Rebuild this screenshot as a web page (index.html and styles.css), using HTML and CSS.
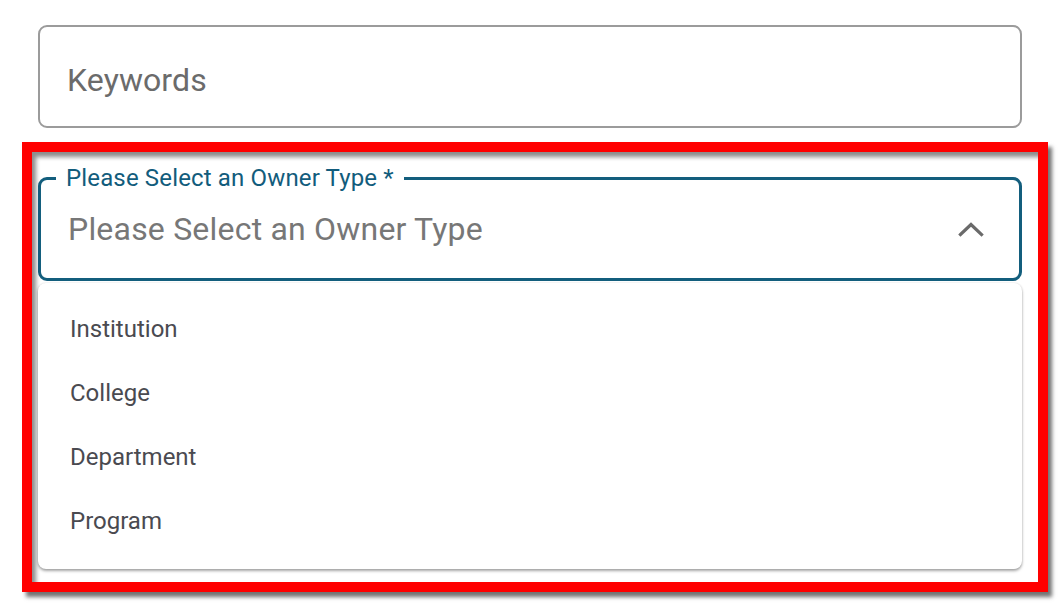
FILE: index.html
```html
<!DOCTYPE html>
<html lang="en">
<head>
<meta charset="utf-8">
<title>Owner Type</title>
<link rel="stylesheet" href="styles.css">
</head>
<body>
<div class="page">
  <div class="input-box">
    <span class="input-placeholder">Keywords</span>
  </div>
  <div class="highlight">
    <fieldset class="select-field">
      <legend class="select-label">Please Select an Owner Type *</legend>
      <div class="select-row">
        <span class="select-placeholder">Please Select an Owner Type</span>
        <svg class="chevron" width="26" height="16" viewBox="0 0 26 16" aria-hidden="true">
          <path d="M2.5 13.5 L13 3.5 L23.5 13.5" fill="none" stroke="#6a6a6a" stroke-width="3.2" stroke-linecap="square"/>
        </svg>
      </div>
    </fieldset>
    <ul class="menu">
      <li class="menu-item">Institution</li>
      <li class="menu-item">College</li>
      <li class="menu-item">Department</li>
      <li class="menu-item">Program</li>
    </ul>
  </div>
</div>
</body>
</html>
```

FILE: styles.css
```css
html, body {
  margin: 0;
  padding: 0;
  background: #ffffff;
}
body {
  font-family: Roboto, "Noto Sans", "Liberation Sans", sans-serif;
  width: 1060px;
  height: 606px;
  overflow: hidden;
}
.page {
  padding-top: 25px;
  display: flex;
  flex-direction: column;
}
.input-box {
  margin-left: 38px;
  width: 984px;
  height: 103px;
  box-sizing: border-box;
  border: 2px solid #9b9b9b;
  border-radius: 9px;
  display: flex;
  align-items: center;
  padding: 6px 0 0 27px;
}
.input-placeholder {
  font-size: 32px;
  color: #6b6b6b;
  letter-spacing: 0.1px;
}
.highlight {
  margin-top: 14px;
  margin-left: 22px;
  width: 1026px;
  height: 450px;
  box-sizing: border-box;
  border: 10px solid #ff0000;
  box-shadow: 4px 5px 4px rgba(0, 0, 0, 0.55), inset 4px 5px 4px rgba(0, 0, 0, 0.45);
  padding: 12px 16px 13px 6px;
  display: flex;
  flex-direction: column;
}
.select-field {
  margin: 0;
  padding: 0;
  height: 117px;
  box-sizing: border-box;
  border: 3px solid #135e7d;
  border-radius: 9px;
  min-width: 0;
}
.select-label {
  margin-left: 15px;
  padding: 0 10px;
  font-size: 24px;
  line-height: 28px;
  color: #125c7c;
  letter-spacing: 0.15px;
}
.select-row {
  display: flex;
  align-items: center;
  justify-content: space-between;
  height: 74px;
  padding: 0 35px 0 27px;
}
.select-placeholder {
  font-size: 32px;
  color: #777777;
  letter-spacing: 0.2px;
}
.chevron {
  display: block;
}
.menu {
  list-style: none;
  margin: 2px 0 0 0;
  padding: 14px 0 16px 0;
  background: #ffffff;
  border-radius: 8px;
  box-shadow: 0 2px 3px rgba(0, 0, 0, 0.35), 0 0 2px rgba(0, 0, 0, 0.12);
}
.menu-item {
  height: 64px;
  display: flex;
  align-items: center;
  padding-left: 32px;
  font-size: 24px;
  color: #4a4a50;
}
```
